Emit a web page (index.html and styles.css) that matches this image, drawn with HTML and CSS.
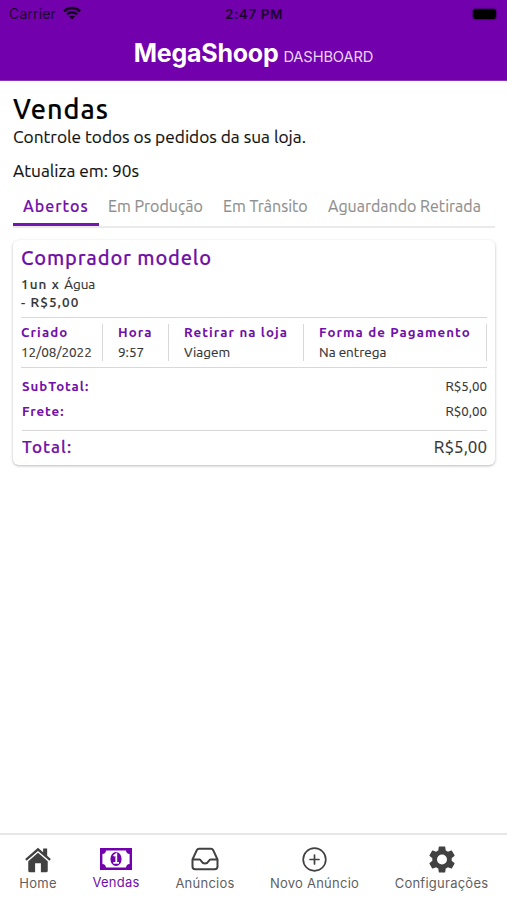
FILE: index.html
```html
<!DOCTYPE html>
<html lang="pt-BR">
<head>
<meta charset="utf-8">
<title>MegaShoop Dashboard</title>
<link rel="stylesheet" href="styles.css">
</head>
<body>
<div class="app">
  <header class="header">
    <div class="status">
      <div class="status-left"><span class="carrier">Carrier</span>
        <svg class="wifi" viewBox="0 0 18 14"><path d="M1 5.2C5.5 1 12.5 1 17 5.2" /><path d="M3.8 8.4C6.9 5.6 11.1 5.6 14.2 8.4"/><path class="dot" d="M6 10.6C7.8 9.2 10.2 9.2 12 10.6L9 13.6Z"/></svg>
      </div>
      <div class="time">2:47 PM</div>
      <div class="status-right"><span class="battery"></span></div>
    </div>
    <div class="brand"><span class="brand-name">MegaShoop</span><span class="brand-sub">DASHBOARD</span></div>
  </header>
  <main class="main">
    <h1 class="title">Vendas</h1>
    <p class="subtitle">Controle todos os pedidos da sua loja.</p>
    <p class="refresh">Atualiza em: 90s</p>
    <nav class="tabs">
      <span class="tab tab-active">Abertos</span>
      <span class="tab tab-prod">Em Produção</span>
      <span class="tab tab-trans">Em Trânsito</span>
      <span class="tab tab-wait">Aguardando Retirada</span>
    </nav>
    <section class="card">
      <h2 class="buyer">Comprador modelo</h2>
      <p class="item"><span class="qty">1un x </span><span class="product">Água</span></p>
      <p class="item price">- R$5,00</p>
      <div class="details">
        <div class="detail d-created"><b>Criado</b><span>12/08/2022</span></div>
        <div class="detail d-hour"><b>Hora</b><span>9:57</span></div>
        <div class="detail d-pick"><b>Retirar na loja</b><span>Viagem</span></div>
        <div class="detail d-pay"><b>Forma de Pagamento</b><span>Na entrega</span></div>
      </div>
      <div class="sums">
        <div class="sum"><b>SubTotal:</b><span>R$5,00</span></div>
        <div class="sum"><b>Frete:</b><span>R$0,00</span></div>
      </div>
      <div class="total"><b>Total:</b><span>R$5,00</span></div>
    </section>
  </main>
  <footer class="tabbar">
    <div class="nav n-home">
      <svg viewBox="0 0 28 28"><path d="M14 1.800 0.7 13.500 2.2 15.300 14 5.100 25.8 15.300 27.3 13.500 23.5 10.100V2.500H19.3V6.400Z"/><path d="M14 7.100 3.9 15.900V26Q3.9 27.200 5.200 27.200H11V18H17V27.200H22.800Q24.100 27.200 24.100 26V15.900Z"/></svg>
      <span>Home</span></div>
    <div class="nav n-sales">
      <svg viewBox="0 0 32 22"><path fill-rule="evenodd" d="M0 0H32V22H0ZM6 2.400A4 4 0 0 1 2.400 6V16A4 4 0 0 1 6 19.600H26A4 4 0 0 1 29.600 16V6A4 4 0 0 1 26 2.400Z"/><ellipse cx="16" cy="11" rx="5.600" ry="7"/><path class="one" d="M13.600 8 16.300 6V14.500M13.300 14.800H19"/></svg>
      <span>Vendas</span></div>
    <div class="nav n-ads">
      <svg class="line" viewBox="0 0 28 24"><path d="M1.500 12.500 5.800 3.200Q6.500 1.800 8 1.800H20Q21.500 1.800 22.200 3.200L26.500 12.500V19.500Q26.500 22.200 23.800 22.200H4.200Q1.500 22.200 1.500 19.500ZM1.500 12.500H8.500C10.500 12.500 10 16.600 14 16.600S17.500 12.500 19.500 12.500H26.500"/></svg>
      <span>Anúncios</span></div>
    <div class="nav n-new">
      <svg class="line" viewBox="0 0 25 25"><circle cx="12.500" cy="12.500" r="11.300"/><path d="M12.500 8V17M8 12.500H17"/></svg>
      <span>Novo Anúncio</span></div>
    <div class="nav n-conf">
      <svg viewBox="2 2 20 20"><path d="M19.140 12.940c.040-.300.060-.610.060-.940s-.020-.640-.070-.940l2.030-1.580a.490.490 0 0 0 .120-.610l-1.920-3.320a.488.488 0 0 0-.590-.220l-2.390.960c-.500-.380-1.030-.700-1.620-.940L14.400 2.810a.484.484 0 0 0-.480-.410h-3.840c-.240 0-.430.170-.470.410L9.250 5.350c-.590.240-1.130.570-1.620.940L5.240 5.330a.488.488 0 0 0-.590.220L2.740 8.870c-.120.210-.080.470.120.610l2.030 1.580c-.050.300-.090.630-.090.940s.020.640.070.940l-2.030 1.580a.490.490 0 0 0-.120.610l1.920 3.320c.120.220.370.290.590.220l2.390-.960c.500.380 1.030.700 1.620.940l.360 2.540c.050.240.240.410.480.410h3.840c.240 0 .440-.170.470-.410l.360-2.540c.590-.240 1.130-.560 1.620-.940l2.390.960c.220.080.470 0 .590-.220l1.920-3.320a.490.490 0 0 0-.120-.610zM12 15.700a3.700 3.700 0 1 1 0-7.400 3.700 3.700 0 0 1 0 7.400z"/></svg>
      <span>Configurações</span></div>
  </footer>
</div>
</body>
</html>
```
FILE: styles.css
```css
* { box-sizing: border-box; margin: 0; padding: 0; }
body { background: #fff; font-family: Ubuntu, "Noto Sans", sans-serif; color: #111; }
.app { width: 507px; height: 900px; display: flex; flex-direction: column; overflow: hidden; white-space: nowrap; }

.header { flex: none; height: 81px; background: #7200ad; font-family: Inter, sans-serif; border-bottom: 1px solid #8a34bb; }
.status { height: 28px; display: grid; grid-template-columns: 1fr auto 1fr; align-items: center; padding: 0 11px 0 9px; color: #1c0030; }
.status-left { display: flex; align-items: center; gap: 7px; }
.carrier { font-size: 14px; letter-spacing: 0.15px; margin-top: -1px; }
.wifi { width: 18px; height: 14px; margin-top: -3px; fill: none; stroke: #12001c; stroke-width: 2.6; }
.wifi .dot { fill: #12001c; stroke: none; }
.time { font-size: 13.500px; font-weight: 600; letter-spacing: 0.6px; padding-left: 3px; margin-top: -1px; }
.status-right { display: flex; justify-content: flex-end; }
.battery { width: 23px; height: 10px; border-radius: 3px; background: #000; box-shadow: 0 0 1px 1px #4d0078; margin-top: -1px; }
.brand { height: 50px; display: flex; justify-content: center; align-items: baseline; gap: 5px; line-height: 51px; color: #fff; }
.brand-name { font-size: 25px; font-weight: 700; letter-spacing: -0.25px; }
.brand-sub { font-size: 14.700px; color: #ead5f7; letter-spacing: -0.15px; }

.main { flex: 1; padding: 13px 12px 0 13px; -webkit-text-stroke-width: 0.15px; }
.title { height: 31px; line-height: 31px; font-size: 27px; font-weight: 500; letter-spacing: 1px; color: #000; }
.subtitle { height: 24px; line-height: 24px; font-size: 17.300px; }
.refresh { height: 34px; line-height: 44px; font-size: 17.300px; }
.tabs { display: flex; height: 44px; margin-top: 1px; border-bottom: 2px solid #eaeaea; font-size: 16px; line-height: 45px; color: #8f8f8f; }
.tab { height: 42px; }
.tab-active { width: 86px; padding-left: 10px; font-weight: 500; letter-spacing: 1px; color: #7110a8; border-bottom: 3px solid #7318ac; }
.tab-prod { margin-left: 9px; width: 115px; }
.tab-trans { width: 105px; }

.card { margin-top: 12px; height: 225px; padding: 3px 8px 0; border-radius: 6px; box-shadow: 0 1px 3px rgba(0,0,0,.28); color: #333; font-size: 13.500px; }
.card b { font-weight: 700; color: #7110a8; -webkit-text-stroke-width: 0; }
.buyer { height: 30px; line-height: 30px; font-size: 20px; font-weight: 500; letter-spacing: 0.85px; color: #7110a8; }
.item { height: 18px; line-height: 22px; }
.qty, .price { font-weight: 500; letter-spacing: 1.100px; white-space: pre; }
.details { margin-top: 8px; height: 51px; padding: 6px 0; border-top: 1px solid #d8d8d8; border-bottom: 1px solid #d8d8d8; display: flex; }
.detail { display: flex; flex-direction: column; border-right: 1px solid #d8d8d8; line-height: 19px; }
.detail b { font-size: 13.300px; line-height: 17px; padding-bottom: 2px; letter-spacing: 1.080px; }
.detail span { font-size: 13.500px; }
.d-created { width: 82px; }
.d-hour { width: 66px; padding-left: 15px; }
.d-pick { width: 135px; padding-left: 15px; }
.d-pay { flex: 1; padding-left: 15px; }
.sums { height: 62px; padding: 6px 0 0 1px; }
.sum { height: 25px; line-height: 25px; display: flex; justify-content: space-between; font-size: 13.300px; }
.sum b { font-size: 13.300px; letter-spacing: 0.95px; }
.total { margin-left: 1px; border-top: 1px solid #d8d8d8; height: 33px; line-height: 32px; font-size: 17px; display: flex; justify-content: space-between; }
.total b { font-weight: 500; letter-spacing: 1.100px; -webkit-text-stroke-width: 0.2px; }

.tabbar { flex: none; height: 67px; border-top: 2px solid #e6e6e6; display: flex; font-family: Inter, sans-serif; font-size: 13px; letter-spacing: 0.25px; color: #5f5f5f; }
.nav { flex: none; display: flex; flex-direction: column; align-items: center; padding-top: 11px; }
.nav span { line-height: 18px; margin-top: 1px; }
.nav svg { height: 27px; width: 28px; fill: #414141; }
.nav svg.line { fill: none; stroke: #414141; stroke-width: 2; stroke-linejoin: round; stroke-linecap: round; }
.n-home { width: 76px; }
.n-sales { width: 80px; color: #7110a8; }
.n-sales svg { width: 32px; height: 26px; fill: #7200ad; }
.nav .one { fill: none; stroke: #fff; stroke-width: 1.800; }
.n-ads { width: 98px; }
.n-ads svg { height: 24px; margin: 1px 0 2px; }
.n-new { width: 121px; }
.n-new svg { width: 25px; height: 25px; margin: 1px 0; }
.n-new svg.line { stroke-width: 1.700; }
.n-conf { width: 132px; padding-left: 1px; }
```
